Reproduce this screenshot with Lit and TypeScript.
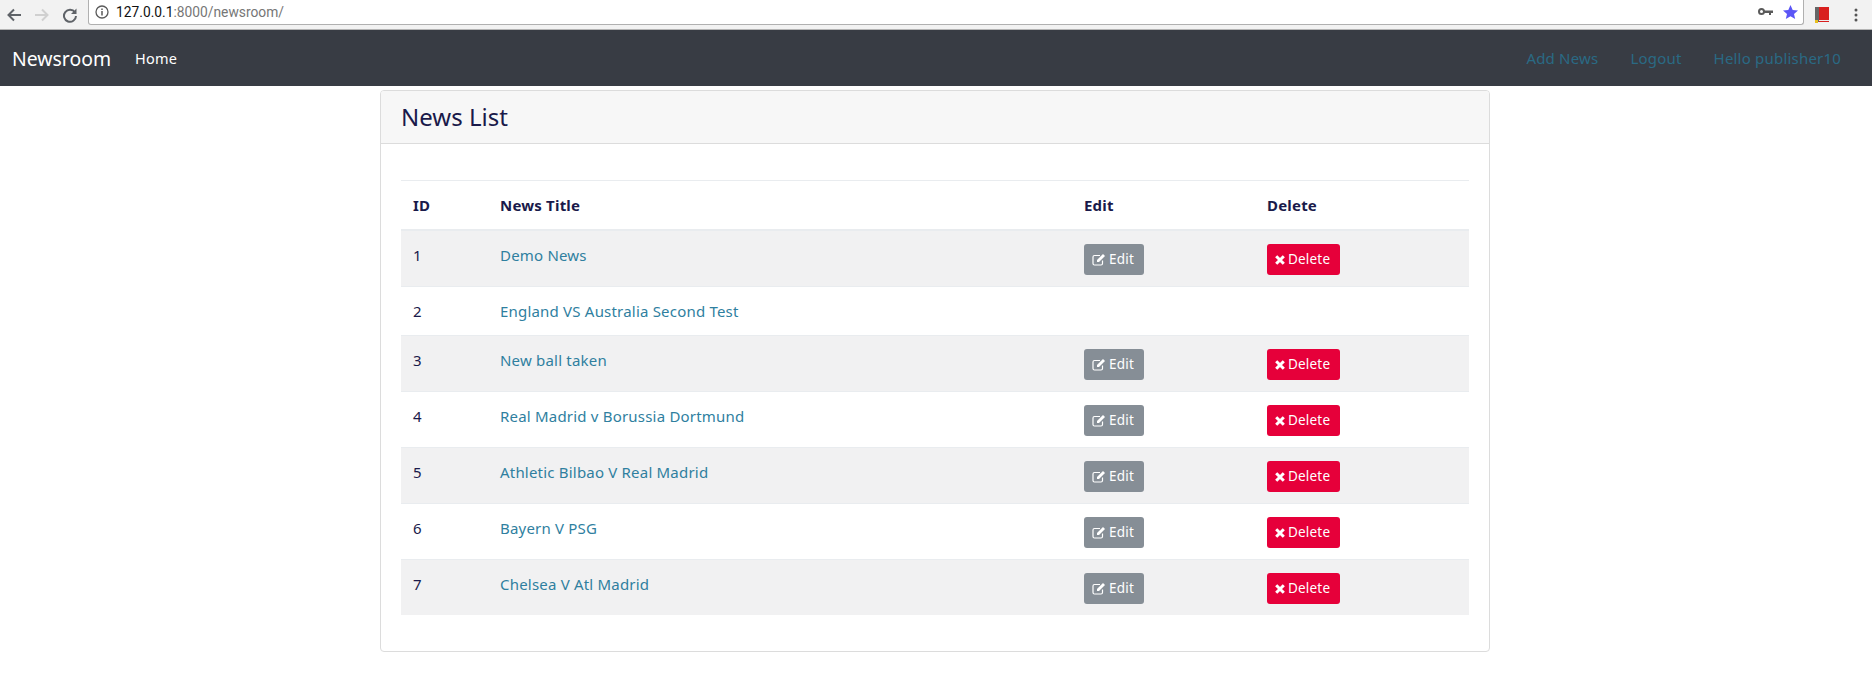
import { css, html, LitElement, svg } from 'lit'
import { customElement } from 'lit/decorators.js'

const rows = [
  { id: 1, title: 'Demo News', edit: true },
  { id: 2, title: 'England VS Australia Second Test', edit: false },
  { id: 3, title: 'New ball taken', edit: true },
  { id: 4, title: 'Real Madrid v Borussia Dortmund', edit: true },
  { id: 5, title: 'Athletic Bilbao V Real Madrid', edit: true },
  { id: 6, title: 'Bayern V PSG', edit: true },
  { id: 7, title: 'Chelsea V Atl Madrid', edit: true },
]

const editIcon = svg`<svg class="ico" width="14" height="13" viewBox="0 0 14 13">
  <path d="M10.5 7.5v3a1.5 1.5 0 0 1-1.5 1.5H2.5A1.5 1.5 0 0 1 1 10.500V4a1.500 1.500 0 0 1 1.500-1.500H8" fill="none" stroke="currentColor" stroke-width="1.200"/>
  <path d="M5 7l6-6 2 2-6 6H5z" fill="currentColor"/>
</svg>`

const closeIcon = svg`<svg class="ico" width="10" height="10" viewBox="0 0 10 10">
  <path d="M1.200 1.200l7.600 7.600M8.800 1.200l-7.600 7.600" fill="none" stroke="currentColor" stroke-width="3"/>
</svg>`

@customElement('app-root')
export class AppRoot extends LitElement {
  static override styles = css`
    :host {
      display: block;
      min-height: 698px;
      background: #fff;
      font-family: 'Noto Sans', 'Open Sans', sans-serif;
      font-size: 15px;
      letter-spacing: 0.2px;
      color: #1a1a4a;
    }

    .chrome {
      display: flex;
      align-items: center;
      height: 30px;
      box-sizing: border-box;
      background: #f2f2f2;
      border-bottom: 1px solid #b4b4b4;
      letter-spacing: 0;
    }

    .nav-btn {
      display: flex;
      width: 28px;
      justify-content: center;
    }

    .btns {
      display: flex;
      width: 88px;
      box-sizing: border-box;
    }

    .omni {
      flex: 1;
      height: 25px;
      margin-top: -5px;
      display: flex;
      align-items: center;
      gap: 7px;
      padding: 0 5px 0 6px;
      background: #fff;
      border: 1px solid #b0b0b0;
      border-top: none;
      border-radius: 0 0 3px 3px;
      font-family: 'Roboto', sans-serif;
      font-size: 13.8px;
      color: #767676;
    }

    .omni b {
      font-weight: 400;
      color: #111;
    }

    .url {
      flex: 1;
    }

    .star {
      margin-left: 3px;
    }

    .ext {
      display: flex;
      align-items: center;
      gap: 25px;
      width: 68px;
      box-sizing: border-box;
      padding-left: 11px;
    }

    .navbar {
      display: flex;
      align-items: center;
      height: 56px;
      background: #383c44;
      padding: 0 31px 0 12px;
    }

    .brand {
      font-size: 19.4px;
      letter-spacing: 0;
      color: #fff;
      margin-right: 24px;
    }

    .home {
      color: #fff;
      font-size: 14.5px;
    }

    .right {
      margin-left: auto;
      display: flex;
      gap: 32px;
      color: #2a6a84;
    }

    .card {
      width: 1110px;
      box-sizing: border-box;
      margin: 4px 0 0 380px;
      border: 1px solid #dcdcdc;
      border-radius: 4px;
    }

    .card-head {
      height: 53px;
      box-sizing: border-box;
      padding: 11px 20px;
      background: #f7f7f7;
      border-bottom: 1px solid #dcdcdc;
      font-size: 24px;
      letter-spacing: 0;
      line-height: 29px;
      border-radius: 3px 3px 0 0;
    }

    .card-body {
      padding: 36px 20px 36px;
    }

    table {
      width: 100%;
      border-collapse: collapse;
      table-layout: fixed;
    }

    th {
      text-align: left;
      font-weight: 700;
      padding: 0 12px;
      height: 48px;
      border-top: 1px solid #e9ecef;
      border-bottom: 2px solid #e9ecef;
    }

    td {
      padding: 12px;
      vertical-align: top;
      border-bottom: 1px solid #e9ecef;
      line-height: 24px;
    }

    td.action {
      padding: 13px 12px 11px;
    }

    tr.odd td {
      background: #f1f1f2;
    }

    tr:last-child td {
      border-bottom: none;
    }

    a {
      color: #2f7f9f;
      text-decoration: none;
    }

    .btn {
      display: flex;
      width: fit-content;
      align-items: center;
      gap: 3px;
      height: 31px;
      box-sizing: border-box;
      padding: 0 10px 0 8px;
      border-radius: 3px;
      color: #fff;
      font-size: 13.5px;
      line-height: 31px;
    }

    .edit {
      background: #868e96;
    }

    .delete {
      background: #e6003a;
    }

    .ico {
      display: block;
    }
  `

  private chromeBar() {
    return html`<div class="chrome">
      <div class="btns">
        <span class="nav-btn"><svg width="16" height="16" viewBox="0 0 16 16"><path d="M15 8H3M8 2.500L2.500 8 8 13.500" fill="none" stroke="#5f6368" stroke-width="2"/></svg></span>
        <span class="nav-btn"><svg width="16" height="16" viewBox="0 0 16 16"><path d="M1 8H13M8 2.500L13.500 8 8 13.500" fill="none" stroke="#d0d0d0" stroke-width="2"/></svg></span>
        <span class="nav-btn"><svg width="16" height="16" viewBox="0 0 16 16"><path d="M13 5.500A6 6 0 1 0 14 9" fill="none" stroke="#5f6368" stroke-width="2"/><path d="M14.500 1.500v5.500H9z" fill="#5f6368"/></svg></span>
      </div>
      <div class="omni">
        <svg width="14" height="14" viewBox="0 0 14 14"><circle cx="7" cy="7" r="6" fill="none" stroke="#5a5a5a" stroke-width="1.300"/><path d="M7 6v4.500M7 3.500v1.500" stroke="#5a5a5a" stroke-width="1.500"/></svg>
        <span class="url"><b>127.0.0.1</b>:8000/newsroom/</span>
        <svg width="15" height="9" viewBox="0 0 15 9"><circle cx="3.500" cy="4.500" r="2.500" fill="none" stroke="#5a5a5a" stroke-width="2"/><path d="M6 3.500h9v2.500h-2v2h-2V6H6z" fill="#5a5a5a"/></svg>
        <svg class="star" width="15" height="14" viewBox="0 0 15 14"><path d="M7.500 0l2.200 4.900 5.300.5-4 3.500 1.200 5.100-4.700-2.700L2.800 14 4 8.900 0 5.400l5.300-.5z" fill="#5b55f6"/></svg>
      </div>
      <div class="ext">
        <svg width="14" height="16" viewBox="0 0 14 16"><rect width="14" height="15" fill="#d9201f"/><rect width="4" height="15" fill="#666"/><rect x="4" y="13" width="10" height="1" fill="#eee"/><rect y="13" width="3" height="3" fill="#e8c020"/></svg>
        <svg width="4" height="14" viewBox="0 0 4 14"><circle cx="2" cy="2" r="1.500" fill="#555"/><circle cx="2" cy="7" r="1.500" fill="#555"/><circle cx="2" cy="12" r="1.500" fill="#555"/></svg>
      </div>
    </div>`
  }

  override render() {
    return html`
      ${this.chromeBar()}
      <div class="navbar">
        <span class="brand">Newsroom</span>
        <span class="home">Home</span>
        <div class="right"><span>Add News</span><span>Logout</span><span>Hello publisher10</span></div>
      </div>
      <div class="card">
        <div class="card-head">News List</div>
        <div class="card-body">
          <table>
            <colgroup><col style="width:87px" /><col style="width:584px" /><col style="width:183px" /><col /></colgroup>
            <thead><tr><th>ID</th><th>News Title</th><th>Edit</th><th>Delete</th></tr></thead>
            <tbody>
              ${rows.map(
                (r, i) => html`<tr class="${i % 2 === 0 ? 'odd' : ''}">
                  <td>${r.id}</td>
                  <td><a>${r.title}</a></td>
                  <td class="action">${r.edit ? html`<span class="btn edit">${editIcon}Edit</span>` : ''}</td>
                  <td class="action">${r.edit ? html`<span class="btn delete">${closeIcon}Delete</span>` : ''}</td>
                </tr>`,
              )}
            </tbody>
          </table>
        </div>
      </div>
    `
  }
}
